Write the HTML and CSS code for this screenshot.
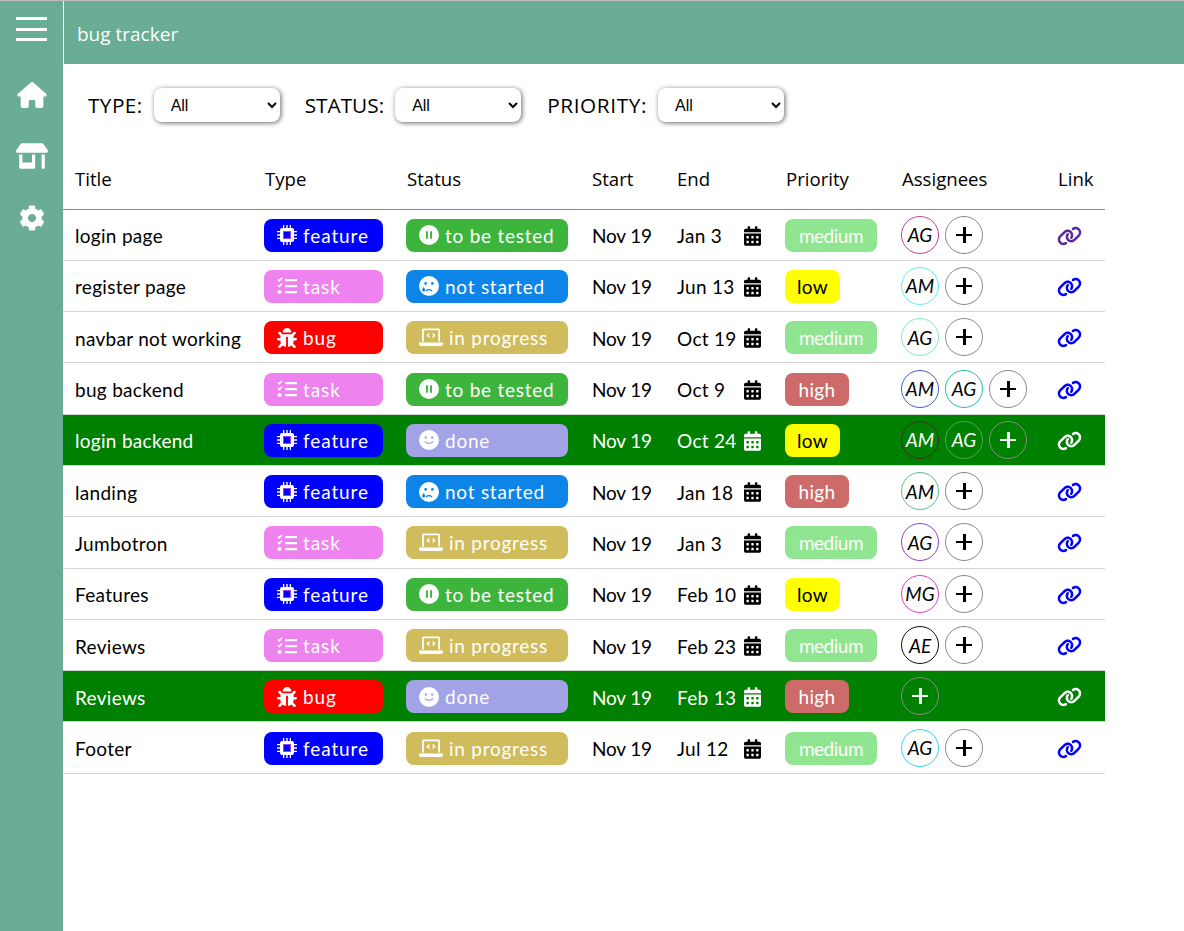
FILE: index.html
```html
<!DOCTYPE html>
<html lang="en">
<head>
    <meta charset="UTF-8">
    <meta name="viewport" content="width=device-width, initial-scale=1.0">
    <title>bug tracker</title>
    <link rel="stylesheet" href="styles.css">
</head>
<body>
    <svg class="sprites" aria-hidden="true">
        <symbol id="i-home" viewBox="0 0 576 512"><path d="M575.8 255.500c0 18-15 32.100-32 32.100h-32l.7 160.200c0 2.700-.2 5.400-.5 8.100V472c0 22.100-17.900 40-40 40H456c-1.100 0-2.200 0-3.300-.1c-1.400 .1-2.800 .1-4.200 .1H416 392c-22.100 0-40-17.900-40-40V448 384c0-17.700-14.300-32-32-32H256c-17.700 0-32 14.300-32 32v64 24c0 22.100-17.900 40-40 40H160 128.100c-1.500 0-3-.1-4.500-.2c-1.200 .1-2.400 .2-3.600 .2H104c-22.100 0-40-17.900-40-40V360c0-.9 0-1.900 .1-2.800V287.600H32c-18 0-32-14-32-32.100c0-9 3-17 10-24L266.400 8c7-7 15-8 22-8s15 2 21 7L564.800 231.500c8 7 12 15 11 24z"/></symbol>
        <symbol id="i-store" viewBox="0 0 640 512"><path d="M320 384H128V224H64v256c0 17.7 14.3 32 32 32h256c17.7 0 32-14.3 32-32V224h-64v160zm314.6-241.8l-85.3-128c-6-8.9-16-14.2-26.7-14.2H117.4c-10.7 0-20.7 5.3-26.6 14.2l-85.3 128c-14.2 21.3 1 49.8 26.6 49.8H608c25.5 0 40.7-28.5 26.6-49.8zM512 496c0 8.8 7.2 16 16 16h32c8.8 0 16-7.2 16-16V224h-64v272z"/></symbol>
        <symbol id="i-cog" viewBox="0 0 512 512"><path d="M487.4 315.7l-42.6-24.6c4.3-23.2 4.3-47 0-70.2l42.6-24.6c4.9-2.8 7.1-8.6 5.5-14-11.1-35.6-30-67.8-54.7-94.6-3.8-4.1-10-5.1-14.8-2.3L380.8 110c-17.9-15.4-38.5-27.3-60.8-35.1V25.8c0-5.6-3.9-10.5-9.4-11.7-36.7-8.2-74.3-7.8-109.2 0-5.5 1.2-9.4 6.1-9.4 11.7V75c-22.2 7.9-42.8 19.8-60.8 35.1L88.7 85.5c-4.9-2.8-11-1.9-14.8 2.3-24.7 26.7-43.6 58.9-54.7 94.6-1.7 5.4.6 11.2 5.5 14L67.3 221c-4.3 23.2-4.3 47 0 70.2l-42.6 24.6c-4.9 2.8-7.1 8.6-5.5 14 11.1 35.6 30 67.8 54.7 94.6 3.8 4.1 10 5.1 14.8 2.3l42.6-24.6c17.9 15.4 38.5 27.3 60.8 35.1v49.2c0 5.6 3.9 10.5 9.4 11.7 36.7 8.2 74.3 7.8 109.2 0 5.5-1.2 9.4-6.1 9.4-11.7v-49.2c22.2-7.9 42.8-19.8 60.8-35.1l42.6 24.6c4.9 2.8 11 1.9 14.8-2.3 24.7-26.7 43.6-58.9 54.7-94.6 1.5-5.5-.7-11.3-5.6-14.1zM256 336c-44.1 0-80-35.9-80-80s35.9-80 80-80 80 35.9 80 80-35.9 80-80 80z"/></symbol>
        <symbol id="i-chip" viewBox="0 0 20 20"><path d="M5 3h10a2 2 0 0 1 2 2v10a2 2 0 0 1-2 2H5a2 2 0 0 1-2-2V5a2 2 0 0 1 2-2zm1 3v8h8V6z" fill-rule="evenodd"/><path d="M6 0h1.300v3H6zM9.300 0h1.400v3H9.300zM12.700 0H14v3h-1.300zM6 17h1.300v3H6zM9.300 17h1.400v3H9.300zM12.700 17H14v3h-1.300zM0 6h3v1.300H0zM0 9.300h3v1.400H0zM0 12.700h3V14H0zM17 6h3v1.300h-3zM17 9.300h3v1.400h-3zM17 12.700h3V14h-3z"/><rect x="6.500" y="6.500" width="7" height="7" fill="none" stroke="#a040f0" stroke-width="1"/></symbol>
        <symbol id="i-tasks" viewBox="0 0 20 18"><path d="M8 2h12v2.200H8zM8 8h12v2.200H8zM8 14h12v2.200H8z"/><path d="M1 2.500l1.300 1.300L5 .8" fill="none" stroke="currentColor" stroke-width="1.600"/><path d="M1 8.200l1.300 1.300 2.700-3" fill="none" stroke="currentColor" stroke-width="1.600"/><circle cx="2.500" cy="15" r="2"/></symbol>
        <symbol id="i-bug" viewBox="0 0 512 512"><path d="M511.988 288.9c-.478 17.43-15.217 31.1-32.653 31.1H424v16c0 21.864-4.882 42.584-13.6 61.145l60.228 60.228c12.496 12.497 12.496 32.758 0 45.255-12.498 12.497-32.759 12.496-45.256 0l-54.736-54.736C345.886 467.965 314.351 480 280 480V236c0-6.627-5.373-12-12-12h-24c-6.627 0-12 5.373-12 12v244c-34.351 0-65.886-12.035-90.636-32.108l-54.736 54.736c-12.498 12.497-32.759 12.496-45.256 0-12.496-12.497-12.496-32.758 0-45.255l60.228-60.228C92.882 378.584 88 357.864 88 336v-16H32.666C15.23 320 .491 306.33.013 288.900-.484 270.816 14.028 256 32 256h56v-58.745l-46.628-46.628c-12.496-12.497-12.496-32.758 0-45.255 12.498-12.497 32.758-12.497 45.256 0L141.255 160h229.489l54.627-54.627c12.498-12.497 32.758-12.497 45.256 0 12.496 12.497 12.496 32.758 0 45.255L424 197.255V256h56c17.972 0 32.484 14.816 31.988 32.900zM257 0c-61.856 0-112 50.144-112 112h224C369 50.144 318.856 0 257 0z"/></symbol>
        <symbol id="i-pause" viewBox="0 0 16 16"><path fill-rule="evenodd" d="M8 0a8 8 0 1 0 0 16A8 8 0 0 0 8 0zM5.600 5h1.500v6H5.600zM8.900 5h1.500v6H8.900z"/></symbol>
        <symbol id="i-sad" viewBox="0 0 16 16"><path fill-rule="evenodd" d="M8 0a8 8 0 1 0 0 16A8 8 0 0 0 8 0zM5.300 4.800a1.100 1.100 0 1 1 0 2.200 1.100 1.100 0 0 1 0-2.200zM10.700 4.800a1.100 1.100 0 1 1 0 2.200 1.100 1.100 0 0 1 0-2.200zM5.300 11.800c.8-1.700 4.300-2 5.500 0l-.9.500c-.8-1.100-2.900-1.100-3.700 0zM3.700 8.800c.8 1.100 1.200 1.800 1.200 2.400a1.200 1.200 0 0 1-2.400 0c0-.6.400-1.300 1.200-2.400z"/></symbol>
        <symbol id="i-smile" viewBox="0 0 16 16"><path fill-rule="evenodd" d="M8 0a8 8 0 1 0 0 16A8 8 0 0 0 8 0zM5.400 5a1 1 0 1 1 0 2 1 1 0 0 1 0-2zM10.600 5a1 1 0 1 1 0 2 1 1 0 0 1 0-2zM4.300 9.400l.8-.6c1.400 1.800 4.400 1.800 5.800 0l.8.6c-1.800 2.300-5.600 2.300-7.400 0z"/></symbol>
        <symbol id="i-laptop" viewBox="0 0 24 18"><path fill-rule="evenodd" d="M4.500 0h15A1.500 1.500 0 0 1 21 1.500V13h-1.800V1.800H4.800V13H3V1.500A1.500 1.500 0 0 1 4.500 0zM0 14h24v1.500a2 2 0 0 1-2 2H2a2 2 0 0 1-2-2z"/><path d="M10.500 5L8.300 7l2.200 2M13.500 5l2.200 2-2.200 2" fill="none" stroke="currentColor" stroke-width="1.300"/></symbol>
        <symbol id="i-cal" viewBox="0 0 448 512"><path d="M0 464c0 26.500 21.500 48 48 48h352c26.500 0 48-21.500 48-48V192H0v272zm320-196c0-6.600 5.400-12 12-12h40c6.600 0 12 5.400 12 12v40c0 6.600-5.400 12-12 12h-40c-6.600 0-12-5.400-12-12v-40zm0 128c0-6.600 5.400-12 12-12h40c6.600 0 12 5.400 12 12v40c0 6.600-5.400 12-12 12h-40c-6.600 0-12-5.400-12-12v-40zM192 268c0-6.600 5.400-12 12-12h40c6.600 0 12 5.400 12 12v40c0 6.600-5.400 12-12 12h-40c-6.600 0-12-5.400-12-12v-40zm0 128c0-6.600 5.400-12 12-12h40c6.600 0 12 5.400 12 12v40c0 6.600-5.400 12-12 12h-40c-6.600 0-12-5.400-12-12v-40zM64 268c0-6.600 5.400-12 12-12h40c6.600 0 12 5.400 12 12v40c0 6.600-5.400 12-12 12H76c-6.600 0-12-5.400-12-12v-40zm0 128c0-6.600 5.400-12 12-12h40c6.600 0 12 5.400 12 12v40c0 6.600-5.400 12-12 12H76c-6.600 0-12-5.400-12-12v-40zM400 64h-48V16c0-8.800-7.200-16-16-16h-32c-8.800 0-16 7.200-16 16v48H160V16c0-8.800-7.200-16-16-16h-32c-8.800 0-16 7.200-16 16v48H48C21.500 64 0 85.500 0 112v48h448v-48c0-26.500-21.500-48-48-48z"/></symbol>
        <symbol id="i-link" viewBox="0 0 640 512"><path d="M579.800 267.700c56.500-56.500 56.500-148 0-204.500c-50-50-128.800-56.500-186.300-15.400l-1.600 1.100c-14.400 10.300-17.700 30.300-7.400 44.600s30.300 17.700 44.600 7.400l1.600-1.100c32.100-22.900 76-19.300 103.800 8.600c31.500 31.500 31.500 82.500 0 114L422.300 334.800c-31.500 31.500-82.500 31.500-114 0c-27.900-27.900-31.500-71.800-8.600-103.800l1.100-1.600c10.300-14.400 6.900-34.400-7.400-44.600s-34.400-6.900-44.600 7.400l-1.100 1.600C206.500 251.200 213 330 263 380c56.500 56.500 148 56.500 204.500 0L579.800 267.700zM60.200 244.300c-56.500 56.500-56.500 148 0 204.500c50 50 128.800 56.500 186.300 15.400l1.600-1.100c14.400-10.300 17.700-30.300 7.400-44.600s-30.300-17.700-44.600-7.400l-1.600 1.100c-32.100 22.900-76 19.300-103.800-8.600C74 372 74 321 105.500 289.500L217.700 177.200c31.500-31.500 82.500-31.500 114 0c27.900 27.900 31.500 71.800 8.600 103.900l-1.100 1.600c-10.300 14.400-6.900 34.400 7.400 44.600s34.400 6.900 44.600-7.400l1.100-1.600C433.500 260.800 427 182 377 132c-56.500-56.500-148-56.500-204.500 0L60.200 244.300z"/></symbol>
    </svg>

    <div class="app">
        <aside class="sidebar">
            <div class="burger"><span></span><span></span><span></span></div>
            <svg class="nav-icon home"><use href="#i-home"/></svg>
            <svg class="nav-icon store"><use href="#i-store"/></svg>
            <svg class="nav-icon cog"><use href="#i-cog"/></svg>
        </aside>
        <main class="main">
            <header class="topbar">bug tracker</header>
            <div class="filters">
                <label class="filter type-filter">TYPE:
                    <select><option>All</option></select>
                </label>
                <label class="filter">STATUS:
                    <select><option>All</option></select>
                </label>
                <label class="filter priority-filter">PRIORITY:
                    <select><option>All</option></select>
                </label>
            </div>
            <table class="board">
                <thead>
                    <tr>
                        <th class="c-title">Title</th>
                        <th class="c-type">Type</th>
                        <th class="c-status">Status</th>
                        <th class="c-start">Start</th>
                        <th class="c-end">End</th>
                        <th class="c-priority">Priority</th>
                        <th class="c-people">Assignees</th>
                        <th class="c-link">Link</th>
                    </tr>
                </thead>
                <tbody>
                    <tr>
                        <td>login page</td>
                        <td><span class="chip type feature"><svg class="ic chip-ic"><use href="#i-chip"/></svg>feature</span></td>
                        <td><span class="chip status tested"><svg class="ic"><use href="#i-pause"/></svg>to be tested</span></td>
                        <td class="start">Nov 19</td>
                        <td><div class="end"><span class="date">Jan 3</span><svg class="cal"><use href="#i-cal"/></svg></div></td>
                        <td><span class="chip prio medium">medium</span></td>
                        <td><div class="people"><span class="avatar" style="border-color:#c0409a">AG</span><span class="avatar add"><i></i></span></div></td>
                        <td><svg class="link visited"><use href="#i-link"/></svg></td>
                    </tr>
                    <tr>
                        <td>register page</td>
                        <td><span class="chip type task"><svg class="ic"><use href="#i-tasks"/></svg>task</span></td>
                        <td><span class="chip status waiting"><svg class="ic"><use href="#i-sad"/></svg>not started</span></td>
                        <td class="start">Nov 19</td>
                        <td><div class="end"><span class="date">Jun 13</span><svg class="cal"><use href="#i-cal"/></svg></div></td>
                        <td><span class="chip prio low">low</span></td>
                        <td><div class="people"><span class="avatar" style="border-color:#5ff0f0">AM</span><span class="avatar add"><i></i></span></div></td>
                        <td><svg class="link"><use href="#i-link"/></svg></td>
                    </tr>
                    <tr>
                        <td>navbar not working</td>
                        <td><span class="chip type bug"><svg class="ic"><use href="#i-bug"/></svg>bug</span></td>
                        <td><span class="chip status progress"><svg class="ic wide"><use href="#i-laptop"/></svg>in progress</span></td>
                        <td class="start">Nov 19</td>
                        <td><div class="end"><span class="date">Oct 19</span><svg class="cal"><use href="#i-cal"/></svg></div></td>
                        <td><span class="chip prio medium">medium</span></td>
                        <td><div class="people"><span class="avatar" style="border-color:#80e8c8">AG</span><span class="avatar add"><i></i></span></div></td>
                        <td><svg class="link"><use href="#i-link"/></svg></td>
                    </tr>
                    <tr>
                        <td>bug backend</td>
                        <td><span class="chip type task"><svg class="ic"><use href="#i-tasks"/></svg>task</span></td>
                        <td><span class="chip status tested"><svg class="ic"><use href="#i-pause"/></svg>to be tested</span></td>
                        <td class="start">Nov 19</td>
                        <td><div class="end"><span class="date">Oct 9</span><svg class="cal"><use href="#i-cal"/></svg></div></td>
                        <td><span class="chip prio high">high</span></td>
                        <td><div class="people"><span class="avatar" style="border-color:#4060d8">AM</span><span class="avatar" style="border-color:#20c0b0">AG</span><span class="avatar add"><i></i></span></div></td>
                        <td><svg class="link"><use href="#i-link"/></svg></td>
                    </tr>
                    <tr class="done-row">
                        <td>login backend</td>
                        <td><span class="chip type feature"><svg class="ic chip-ic"><use href="#i-chip"/></svg>feature</span></td>
                        <td><span class="chip status done"><svg class="ic"><use href="#i-smile"/></svg>done</span></td>
                        <td class="start">Nov 19</td>
                        <td><div class="end"><span class="date">Oct 24</span><svg class="cal"><use href="#i-cal"/></svg></div></td>
                        <td><span class="chip prio low">low</span></td>
                        <td><div class="people"><span class="avatar" style="border-color:#4a2a2a">AM</span><span class="avatar" style="border-color:#50a850">AG</span><span class="avatar add"><i></i></span></div></td>
                        <td><svg class="link"><use href="#i-link"/></svg></td>
                    </tr>
                    <tr>
                        <td>landing</td>
                        <td><span class="chip type feature"><svg class="ic chip-ic"><use href="#i-chip"/></svg>feature</span></td>
                        <td><span class="chip status waiting"><svg class="ic"><use href="#i-sad"/></svg>not started</span></td>
                        <td class="start">Nov 19</td>
                        <td><div class="end"><span class="date">Jan 18</span><svg class="cal"><use href="#i-cal"/></svg></div></td>
                        <td><span class="chip prio high">high</span></td>
                        <td><div class="people"><span class="avatar" style="border-color:#60b890">AM</span><span class="avatar add"><i></i></span></div></td>
                        <td><svg class="link"><use href="#i-link"/></svg></td>
                    </tr>
                    <tr>
                        <td>Jumbotron</td>
                        <td><span class="chip type task"><svg class="ic"><use href="#i-tasks"/></svg>task</span></td>
                        <td><span class="chip status progress"><svg class="ic wide"><use href="#i-laptop"/></svg>in progress</span></td>
                        <td class="start">Nov 19</td>
                        <td><div class="end"><span class="date">Jan 3</span><svg class="cal"><use href="#i-cal"/></svg></div></td>
                        <td><span class="chip prio medium">medium</span></td>
                        <td><div class="people"><span class="avatar" style="border-color:#9040d0">AG</span><span class="avatar add"><i></i></span></div></td>
                        <td><svg class="link"><use href="#i-link"/></svg></td>
                    </tr>
                    <tr>
                        <td>Features</td>
                        <td><span class="chip type feature"><svg class="ic chip-ic"><use href="#i-chip"/></svg>feature</span></td>
                        <td><span class="chip status tested"><svg class="ic"><use href="#i-pause"/></svg>to be tested</span></td>
                        <td class="start">Nov 19</td>
                        <td><div class="end"><span class="date">Feb 10</span><svg class="cal"><use href="#i-cal"/></svg></div></td>
                        <td><span class="chip prio low">low</span></td>
                        <td><div class="people"><span class="avatar" style="border-color:#e040c0">MG</span><span class="avatar add"><i></i></span></div></td>
                        <td><svg class="link"><use href="#i-link"/></svg></td>
                    </tr>
                    <tr>
                        <td>Reviews</td>
                        <td><span class="chip type task"><svg class="ic"><use href="#i-tasks"/></svg>task</span></td>
                        <td><span class="chip status progress"><svg class="ic wide"><use href="#i-laptop"/></svg>in progress</span></td>
                        <td class="start">Nov 19</td>
                        <td><div class="end"><span class="date">Feb 23</span><svg class="cal"><use href="#i-cal"/></svg></div></td>
                        <td><span class="chip prio medium">medium</span></td>
                        <td><div class="people"><span class="avatar" style="border-color:#101010">AE</span><span class="avatar add"><i></i></span></div></td>
                        <td><svg class="link"><use href="#i-link"/></svg></td>
                    </tr>
                    <tr class="done-row">
                        <td>Reviews</td>
                        <td><span class="chip type bug"><svg class="ic"><use href="#i-bug"/></svg>bug</span></td>
                        <td><span class="chip status done"><svg class="ic"><use href="#i-smile"/></svg>done</span></td>
                        <td class="start">Nov 19</td>
                        <td><div class="end"><span class="date">Feb 13</span><svg class="cal"><use href="#i-cal"/></svg></div></td>
                        <td><span class="chip prio high">high</span></td>
                        <td><div class="people"><span class="avatar add"><i></i></span></div></td>
                        <td><svg class="link"><use href="#i-link"/></svg></td>
                    </tr>
                    <tr>
                        <td>Footer</td>
                        <td><span class="chip type feature"><svg class="ic chip-ic"><use href="#i-chip"/></svg>feature</span></td>
                        <td><span class="chip status progress"><svg class="ic wide"><use href="#i-laptop"/></svg>in progress</span></td>
                        <td class="start">Nov 19</td>
                        <td><div class="end"><span class="date">Jul 12</span><svg class="cal"><use href="#i-cal"/></svg></div></td>
                        <td><span class="chip prio medium">medium</span></td>
                        <td><div class="people"><span class="avatar" style="border-color:#30d8e0">AG</span><span class="avatar add"><i></i></span></div></td>
                        <td><svg class="link"><use href="#i-link"/></svg></td>
                    </tr>
                </tbody>
            </table>
        </main>
    </div>
</body>
</html>
```

FILE: styles.css
```css
* {
    box-sizing: border-box;
}
body {
    margin: 0;
    font-family: "Open Sans", "Noto Sans", sans-serif;
    color: #000;
    background: #fff;
    border-top: 1px solid #bdbdbd;
}
.sprites {
    display: none;
}
.app {
    display: flex;
    min-height: 930px;
}
.sidebar {
    width: 63px;
    flex: none;
    background: #68ad94;
    display: flex;
    flex-direction: column;
    align-items: center;
    padding-top: 16px;
    color: #fff;
}
.burger {
    width: 31px;
    display: flex;
    flex-direction: column;
    gap: 7.5px;
    margin-bottom: 41px;
}
.burger span {
    height: 3px;
    background: #fff;
}
.nav-icon {
    fill: currentColor;
}
.nav-icon.home {
    width: 30px;
    height: 26px;
    margin-bottom: 35px;
}
.nav-icon.store {
    width: 32px;
    height: 26px;
    margin-bottom: 36px;
}
.nav-icon.cog {
    width: 26px;
    height: 26px;
}
.main {
    flex: 1;
    min-width: 0;
}
.topbar {
    height: 63px;
    margin-left: 1px;
    background: #68ad94;
    color: #fff;
    font-size: 19px;
    line-height: 66px;
    padding-left: 13px;
}
.filters {
    display: flex;
    gap: 25px;
    padding: 24px 0 0 25px;
    height: 86px;
}
.filter {
    display: flex;
    align-items: center;
    gap: 11px;
    height: 34px;
    font-size: 20.8px;
}
.type-filter {
    letter-spacing: .4px;
}
.priority-filter {
    margin-left: 1px;
    letter-spacing: .6px;
}
.filter select {
    width: 126px;
    height: 34px;
    padding-left: 13px;
    font-family: "Liberation Sans", Arial, sans-serif;
    font-size: 16px;
    color: #000;
    background: #fff;
    border: none;
    border-radius: 8px;
    box-shadow: 1px 1px 5px #666;
}
.board {
    width: 1042px;
    table-layout: fixed;
    border-collapse: collapse;
    font-family: Lato, "Noto Sans", sans-serif;
    font-size: 19px;
    letter-spacing: .3px;
}
.board th {
    height: 59px;
    padding: 0 12px 2px;
    text-align: left;
    font-family: "Open Sans", "Noto Sans", sans-serif;
    font-size: 18.6px;
    font-weight: 400;
    letter-spacing: 0;
    border-bottom: 1px solid #8a8a8a;
}
.c-title { width: 190px; }
.c-type { width: 142px; }
.c-status { width: 185px; }
.c-start { width: 85px; }
.c-end { width: 109px; }
.c-priority { width: 116px; }
.c-people { width: 156px; }
.c-link { width: 59px; }
.board td {
    height: 51.3px;
    padding: 2px 11px 0 12px;
    border-bottom: 1px solid #d4d4d4;
    white-space: nowrap;
}
.board td:nth-child(2),
.board td:nth-child(3),
.board td:nth-child(6),
.board td:nth-child(7) {
    padding-left: 11px;
}
.board .start {
    letter-spacing: -.2px;
}
.done-row {
    background: #008000;
    color: #fff;
}
.chip {
    display: inline-flex;
    align-items: center;
    height: 33px;
    margin-top: -1px;
    padding: 0 13px;
    border-radius: 8px;
    color: #fff;
    vertical-align: middle;
}
.chip.type {
    width: 119px;
    letter-spacing: .9px;
}
.chip.status {
    width: 162px;
    letter-spacing: .75px;
}
.chip.prio {
    justify-content: center;
    padding: 0;
}
.ic {
    width: 20px;
    height: 20px;
    margin-right: 6px;
    flex: none;
    fill: currentColor;
}
.ic.wide {
    width: 24px;
    height: 19px;
}
.feature { background: #0000ff; }
.task { background: #ee82ee; }
.bug { background: #ff0000; }
.tested { background: #3db53d; }
.waiting { background: #0d84e8; }
.progress { background: #d0bc5c; }
.done { background: #a2a2e6; }
.chip.medium { width: 92px; background: #90e690; letter-spacing: -.5px; }
.chip.low { width: 55px; background: #ffff00; color: #000; }
.chip.high { width: 64px; background: #cd6a6a; }
.end {
    display: flex;
    align-items: center;
}
.date {
    width: 67px;
}
.cal {
    width: 17px;
    height: 20px;
    fill: currentColor;
}
.people {
    display: flex;
    gap: 6px;
    margin-top: -2px;
}
.avatar {
    width: 38px;
    height: 38px;
    border: 1px solid #888;
    border-radius: 50%;
    display: flex;
    align-items: center;
    justify-content: center;
    letter-spacing: 0;
    font-style: italic;
}
.add {
    border-color: #8a8a8a;
}
.add i {
    width: 16px;
    height: 16px;
    background:
        linear-gradient(currentColor, currentColor) center / 100% 2px no-repeat,
        linear-gradient(currentColor, currentColor) center / 3px 100% no-repeat;
}
.link {
    width: 25px;
    height: 20px;
    display: block;
    margin-left: -1px;
    fill: #0000ff;
}
.link.visited {
    fill: #5a2a9a;
}
.done-row .link {
    fill: #fff;
}
```
